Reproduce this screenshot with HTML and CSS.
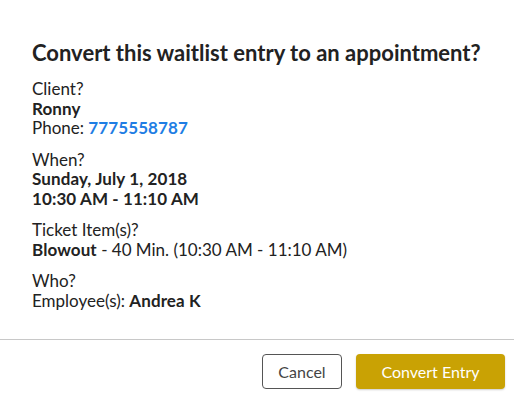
FILE: index.html
```html
<!DOCTYPE html>
<html>
<head>
<meta charset="utf-8">
<link rel="stylesheet" href="styles.css">
</head>
<body>
<div class="dialog">
  <div class="body">
    <h1 class="title">Convert this waitlist entry to an appointment?</h1>
    <div class="section">
      <div>Client?</div>
      <div class="b">Ronny</div>
      <div>Phone: <a class="link" href="#">7775558787</a></div>
    </div>
    <div class="section">
      <div>When?</div>
      <div class="b">Sunday, July 1, 2018</div>
      <div class="b">10:30 AM - 11:10 AM</div>
    </div>
    <div class="section">
      <div>Ticket Item(s)?</div>
      <div><span class="b">Blowout</span> - 40 Min. (10:30 AM - 11:10 AM)</div>
    </div>
    <div class="section">
      <div>Who?</div>
      <div>Employee(s): <span class="b">Andrea K</span></div>
    </div>
  </div>
  <div class="footer">
    <button class="btn btn-cancel">Cancel</button>
    <button class="btn btn-primary">Convert Entry</button>
  </div>
</div>
</body>
</html>
```
FILE: styles.css
```css
html, body {
  margin: 0;
  padding: 0;
  background: #fff;
}
.dialog {
  width: 514px;
  height: 400px;
  font-family: Lato, "Open Sans", sans-serif;
  color: #222;
  font-size: 17px;
  line-height: 19.5px;
  display: flex;
  flex-direction: column;
}
.body {
  box-sizing: border-box;
  padding: 39px 32px 0 32px;
  height: 339px;
}
.title {
  margin: 0 0 12px 0;
  font-size: 22px;
  line-height: 28px;
  font-weight: 700;
  color: #222;
}
.section {
  margin-bottom: 12px;
}
.b {
  font-weight: 700;
  letter-spacing: 0.1px;
}
.link {
  color: #1f7ee4;
  font-weight: 700;
  letter-spacing: 0.1px;
  text-decoration: none;
}
.footer {
  border-top: 1px solid #c8c8c8;
  display: flex;
  justify-content: flex-end;
  gap: 14px;
  padding: 14px 9px 0 0;
}
.btn {
  height: 35px;
  border-radius: 4px;
  font-family: Lato, "Open Sans", sans-serif;
  font-size: 16px;
  cursor: pointer;
}
.btn-cancel {
  width: 80px;
  background: #fff;
  border: 1px solid #555;
  color: #444;
}
.btn-primary {
  width: 149px;
  background: #c9a204;
  border: none;
  color: #fff;
  box-shadow: 0 1px 2px rgba(0,0,0,0.2);
}
```
